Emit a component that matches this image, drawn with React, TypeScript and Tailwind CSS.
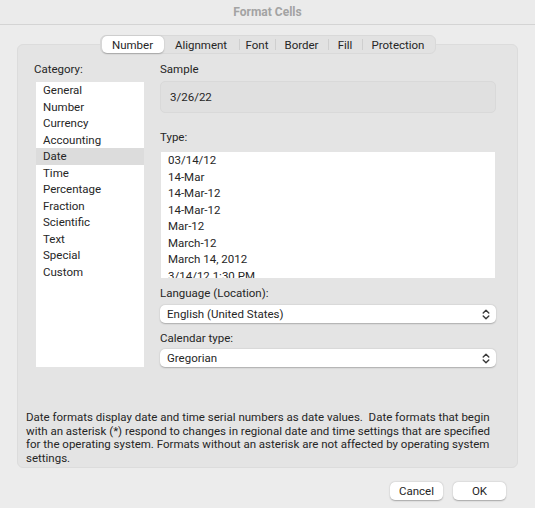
import React from "react";

const categories = [
  "General",
  "Number",
  "Currency",
  "Accounting",
  "Date",
  "Time",
  "Percentage",
  "Fraction",
  "Scientific",
  "Text",
  "Special",
  "Custom",
];

const types = [
  "03/14/12",
  "14-Mar",
  "14-Mar-12",
  "14-Mar-12",
  "Mar-12",
  "March-12",
  "March 14, 2012",
  "3/14/12 1:30 PM",
];

function Chevrons() {
  return (
    <svg width="8" height="11" viewBox="0 0 8 11" fill="none" stroke="#3a3a3a" strokeWidth="1.4" strokeLinecap="round" strokeLinejoin="round">
      <path d="M1.2 4 L4 1.2 L6.8 4" />
      <path d="M1.2 7 L4 9.8 L6.8 7" />
    </svg>
  );
}

function Select({ value }: { value: string }) {
  return (
    <div className="flex h-[18px] items-center justify-between rounded-[5px] bg-white pl-[7px] pr-[6px] shadow-[0_0.5px_1.5px_rgba(0,0,0,0.25)]">
      <span>{value}</span>
      <Chevrons />
    </div>
  );
}

const tabs: { label: string; w: string }[] = [
  { label: "Number", w: "w-[62px]" },
  { label: "Alignment", w: "w-[75px]" },
  { label: "Font", w: "w-[35px]" },
  { label: "Border", w: "w-[52px]" },
  { label: "Fill", w: "w-[33px]" },
  { label: "Protection", w: "w-[71px]" },
];

export default function App() {
  return (
    <div
      className="relative h-[508px] w-[535px] overflow-hidden bg-[#ececec] text-[11.5px] leading-[16px] text-[#262626]"
      style={{ fontFamily: "Roboto, Inter, 'Noto Sans', sans-serif" }}
    >
      {/* Title bar */}
      <div className="flex h-[25px] items-center justify-center border-b border-[#d4d4d4] bg-[#ebebeb]">
        <span className="text-[12px] font-bold text-[#a3a3a3]">Format Cells</span>
      </div>

      <div className="mx-[17px] mt-[10px]">
        {/* Tabs */}
        <div className="relative z-10 flex justify-center">
          <div className="flex h-[19px] items-center rounded-[6px] border border-[#d9d9d9] bg-[#e2e2e2] px-[1px]">
            {tabs.map((t, i) => (
              <React.Fragment key={t.label}>
                {i > 1 && <div className="h-[11px] w-px bg-[#cfcfcf]" />}
                <div
                  className={
                    i === 0
                      ? "flex h-[17px] w-[62px] items-center justify-center rounded-[5px] bg-white shadow-[0_0.5px_1.5px_rgba(0,0,0,0.25)]"
                      : `flex h-[17px] ${t.w} items-center justify-center`
                  }
                >
                  {t.label}
                </div>
              </React.Fragment>
            ))}
          </div>
        </div>

        {/* Panel */}
        <div className="-mt-[10px] flex h-[424px] flex-col rounded-[6px] border border-[#dcdcdc] bg-[#e4e4e4] pt-[16px]">
          <div className="flex">
            {/* Left column */}
            <div className="ml-[16px] flex w-[111px] flex-col">
              <div>Category:</div>
              <div className="ml-[2px] mt-[5px] h-[285px] w-[108px] bg-white">
                {categories.map((c) => (
                  <div
                    key={c}
                    className={
                      c === "Date"
                        ? "h-[16.5px] bg-[#dcdcdc] pl-[7px] leading-[16.5px]"
                        : "h-[16.5px] pl-[7px] leading-[16.5px]"
                    }
                  >
                    {c}
                  </div>
                ))}
              </div>
            </div>

            {/* Right column */}
            <div className="ml-[15px] flex w-[336px] flex-col">
              <div>Sample</div>
              <div className="mt-[4px] flex h-[32px] items-center rounded-[5px] border border-[#d9d9d9] bg-[#e0e0e0] pl-[9px]">
                3/26/22
              </div>
              <div className="mt-[16px]">Type:</div>
              <div className="ml-[1px] mt-[7px] h-[126px] w-[334px] overflow-hidden bg-white">
                {types.map((t, i) => (
                  <div key={i} className="h-[16.5px] whitespace-nowrap pl-[7px] leading-[16.5px]">
                    {t}
                  </div>
                ))}
              </div>
              <div className="mt-[7px]">Language (Location):</div>
              <div className="mt-[4px]">
                <Select value="English (United States)" />
              </div>
              <div className="mt-[7px]">Calendar type:</div>
              <div className="mt-[3px]">
                <Select value="Gregorian" />
              </div>
            </div>
          </div>

          <div className="mt-auto whitespace-nowrap pb-[1px] pl-[8px] leading-[13.8px]">
            Date formats display date and time serial numbers as date values.&nbsp; Date formats that begin
            <br />
            with an asterisk (*) respond to changes in regional date and time settings that are specified
            <br />
            for the operating system. Formats without an asterisk are not affected by operating system
            <br />
            settings.
          </div>
        </div>
      </div>

      {/* Buttons */}
      <div className="mr-[29px] mt-[14px] flex justify-end gap-[10px]">
        <div className="flex h-[18px] w-[53px] items-center justify-center rounded-[5px] bg-white shadow-[0_0.5px_1.5px_rgba(0,0,0,0.3)]">
          Cancel
        </div>
        <div className="flex h-[18px] w-[53px] items-center justify-center rounded-[5px] bg-white shadow-[0_0.5px_1.5px_rgba(0,0,0,0.3)]">
          OK
        </div>
      </div>
    </div>
  );
}
